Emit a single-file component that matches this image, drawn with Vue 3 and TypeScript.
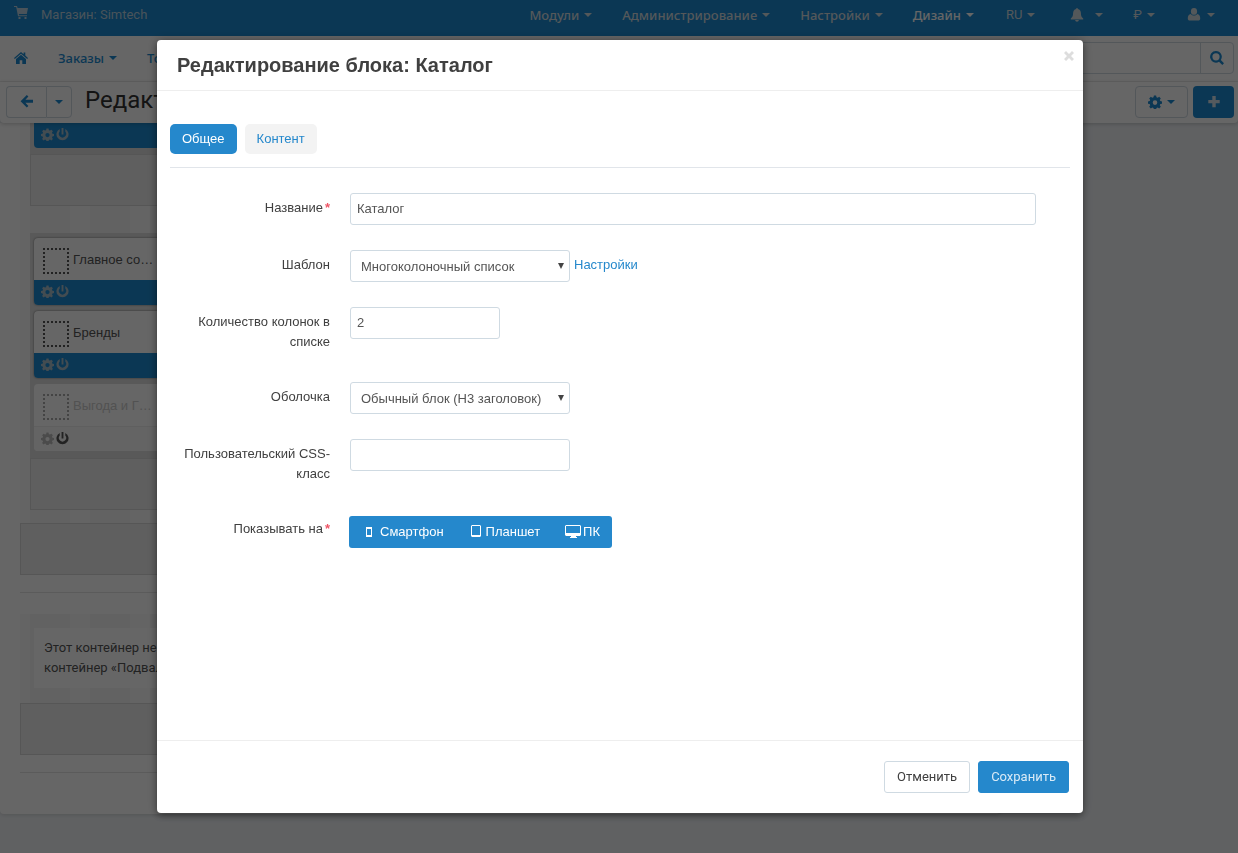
<script setup lang="ts">
import { ref } from 'vue'

type IconName = 'cart' | 'home' | 'back' | 'bell' | 'user' | 'search' | 'gear' | 'plus' | 'power'

const icons: Record<IconName, string> = {
  cart: 'M0 0h3l.6 2H14l-1.2 6H4.8l.3 1.2H13v1H4L2.2 1H0zM4.5 11h2v2h-2zM10.5 11h2v2h-2z',
  home: 'M7 1l2.600 2.200V1.600h1.700v3L14 7l-.8.9L7 2.700.8 7.900 0 7zM7 3.800l5 4.200v5H8.300V9.300H5.700V13H2V8z',
  back: 'M6.800 0l1.600 1.600-3 3.200H13v3H5.400l3 3.200-1.600 1.600L.6 6.300z',
  bell: 'M7 0c.6 0 .9.4.9 1 2 .5 3 2.200 3 4 0 3 .8 4.200 2.300 5.500v1H.8v-1C2.300 9.200 3.100 8 3.100 5c0-1.800 1-3.500 3-4 0-.6.3-1 .9-1zM5.200 12h3.600c0 1-.8 1.700-1.800 1.700S5.200 13 5.200 12z',
  user: 'M7 0a3.100 3.400 0 110 6.800A3.100 3.400 0 017 0zM3.800 6.100c.9 1 2 1.500 3.200 1.500s2.300-.5 3.200-1.500c2.200.2 3 2 3 4.400 0 1.400-.8 2-2 2H2.800c-1.200 0-2-.6-2-2 0-2.400.8-4.200 3-4.400z',
  search: 'M6 0a5.800 5.800 0 014.800 9l3.200 3.200-1.700 1.700L9 10.700A5.800 5.800 0 116 0zm0 2.200a3.600 3.600 0 100 7.200 3.600 3.600 0 000-7.200z',
  gear: 'M5.900.5h2.200l.4 1.800 1.200.5 1.500-1 1.600 1.600-1 1.500.5 1.200 1.700.4v2.200l-1.700.4-.5 1.200 1 1.500-1.600 1.600-1.500-1-1.200.5-.4 1.700H5.900l-.4-1.700-1.200-.5-1.500 1-1.600-1.600 1-1.500-.5-1.200L0 8.700V6.500l1.700-.4.500-1.200-1-1.500 1.600-1.600 1.500 1 1.200-.5zM7 5.300a2.300 2.300 0 100 4.600 2.300 2.300 0 000-4.600z',
  plus: 'M5.300 1h3.400v4h4v3.300h-4v4H5.300v-4h-4V5h4z',
  power: 'M6 0h2v7H6zM4 1v2.800a3.900 3.900 0 106 0V1a6.500 6.500 0 11-6 0z',
}

const menu = ['Модули', 'Администрирование', 'Настройки', 'Дизайн']
const blocks = [
  { title: 'Главное со…', off: false },
  { title: 'Бренды', off: false },
  { title: 'Выгода и Г…', off: true },
]
const tab = ref('Общее')
const tabs = ['Общее', 'Контент']
const name = ref('Каталог')
const columns = ref('2')
const cssClass = ref('')
</script>

<template>
  <div class="page">
    <header class="topbar">
      <a class="store" href="#">
        <svg class="ico" viewBox="0 0 14 14"><path :d="icons.cart" /></svg>
        <span>Магазин: Simtech</span>
      </a>
      <nav class="menu">
        <a v-for="m in menu" :key="m" href="#" :class="{ current: m === 'Дизайн' }">{{ m }}<i class="caret"></i></a>
        <a class="plain lang" href="#">RU<i class="caret"></i></a>
        <a class="bell" href="#" aria-label="Уведомления"><svg class="ico" viewBox="0 0 14 14"><path :d="icons.bell" /></svg><i class="caret"></i></a>
        <a class="plain" href="#">₽<i class="caret"></i></a>
        <a class="user" href="#" aria-label="Профиль"><svg class="ico" viewBox="0 0 14 14"><path :d="icons.user" /></svg><i class="caret"></i></a>
      </nav>
    </header>

    <div class="subnav">
      <a href="#" aria-label="Главная"><svg class="ico" viewBox="0 0 14 14"><path :d="icons.home" /></svg></a>
      <a href="#">Заказы<i class="caret"></i></a>
      <a href="#">Товары<i class="caret"></i></a>
      <form class="search" @submit.prevent>
        <input type="text" aria-label="Поиск" />
        <button type="submit" aria-label="Найти"><svg class="ico" viewBox="0 0 14 14"><path :d="icons.search" /></svg></button>
      </form>
    </div>

    <div class="actions">
      <div class="split">
        <button aria-label="Назад"><svg class="ico" viewBox="0 0 14 14"><path :d="icons.back" /></svg></button>
        <button aria-label="История"><i class="caret"></i></button>
      </div>
      <h1>Редактирование макета</h1>
      <button class="tool" aria-label="Действия"><svg class="ico" viewBox="0 0 14 14"><path fill-rule="evenodd" :d="icons.gear" /></svg><i class="caret"></i></button>
      <button class="add" aria-label="Добавить"><svg class="ico" viewBox="0 0 14 14"><path :d="icons.plus" /></svg></button>
    </div>

    <main class="layout">
      <div class="sheet">
        <section class="stripes main-area">
          <div class="grid first">
            <div class="card-foot">
              <svg class="ico" viewBox="0 0 14 14"><path fill-rule="evenodd" :d="icons.gear" /></svg>
              <svg class="ico" viewBox="0 0 14 14"><path :d="icons.power" /></svg>
            </div>
          </div>
          <div class="bar"></div>
          <div class="grid second">
            <article v-for="b in blocks" :key="b.title" class="card" :class="{ off: b.off }">
              <div class="card-head"><span class="slot"></span><span>{{ b.title }}</span></div>
              <div class="card-foot">
                <svg class="ico" viewBox="0 0 14 14"><path fill-rule="evenodd" :d="icons.gear" /></svg>
                <svg class="ico power" viewBox="0 0 14 14"><path :d="icons.power" /></svg>
              </div>
            </article>
          </div>
          <div class="bar"></div>
        </section>
        <div class="bar"></div>
        <hr />
        <section class="stripes footer-area">
          <p>Этот контейнер не используется.<br />контейнер «Подвал» по умолчанию.</p>
        </section>
        <div class="bar"></div>
        <hr />
      </div>
    </main>

    <div class="overlay">
      <div class="dialog" role="dialog" aria-labelledby="dialog-title">
        <header class="dialog-head">
          <h2 id="dialog-title">Редактирование блока: Каталог</h2>
          <button class="close" aria-label="Закрыть"><svg viewBox="0 0 10 10"><path d="M2 0l3 3 3-3 2 2-3 3 3 3-2 2-3-3-3 3-2-2 3-3-3-3z" /></svg></button>
        </header>
        <div class="dialog-body">
          <div class="tabs">
            <button v-for="t in tabs" :key="t" :class="{ active: tab === t }" @click="tab = t">{{ t }}</button>
          </div>
          <form class="fields" @submit.prevent>
            <div class="row">
              <label for="f-name">Название<b>*</b></label>
              <div class="control"><input id="f-name" v-model="name" class="full" type="text" /></div>
            </div>
            <div class="row">
              <label for="f-template">Шаблон</label>
              <div class="control">
                <span class="select"><select id="f-template"><option>Многоколоночный список</option></select></span>
                <a href="#">Настройки</a>
              </div>
            </div>
            <div class="row">
              <label for="f-columns">Количество колонок в списке</label>
              <div class="control"><input id="f-columns" v-model="columns" class="short" type="text" /></div>
            </div>
            <div class="row">
              <label for="f-wrapper">Оболочка</label>
              <div class="control"><span class="select"><select id="f-wrapper"><option>Обычный блок (H3 заголовок)</option></select></span></div>
            </div>
            <div class="row">
              <label for="f-class">Пользовательский CSS-класс</label>
              <div class="control"><input id="f-class" v-model="cssClass" type="text" /></div>
            </div>
            <div class="row">
              <span id="devices" class="label">Показывать на<b>*</b></span>
              <div class="devices" role="group" aria-labelledby="devices">
                <button type="button"><svg class="phone" viewBox="0 0 6 10"><path fill-rule="evenodd" d="M0 0h6v10H0zM1 2h4v6H1z" /></svg>Смартфон</button>
                <button type="button"><svg class="tablet" viewBox="0 0 10 12"><path fill-rule="evenodd" d="M1 0h8l1 1v10l-1 1H1l-1-1V1zM1 1v9h8V1z" /></svg>Планшет</button>
                <button type="button"><svg class="desktop" viewBox="0 0 16 13"><path fill-rule="evenodd" d="M1 0h14l1 1v9l-1 1h-4v1h1v1H5v-1h1v-1H1l-1-1V1zM1 1v7h14V1z" /></svg>ПК</button>
              </div>
            </div>
          </form>
        </div>
        <footer class="dialog-foot">
          <button class="cancel">Отменить</button>
          <button class="save">Сохранить</button>
        </footer>
      </div>
    </div>
  </div>
</template>

<style>
body { margin: 0; background: #f0f3f6; overflow: hidden; }
</style>

<style scoped>
* { box-sizing: border-box; }
button, input, select { font: inherit; color: inherit; margin: 0; padding: 0; }
a { text-decoration: none; }
h1, h2, p { margin: 0; }
.page {
  height: 100vh; overflow: hidden; display: flex; flex-direction: column;
  font: 13px/20px "Liberation Sans", Arial, sans-serif; color: #404040; background: #f0f3f6;
}
.ico { width: 14px; height: 14px; fill: currentColor; flex: none; }
.caret { border: 4px solid transparent; border-top-color: currentColor; border-bottom: 0; flex: none; }

.topbar {
  height: 36px; flex: none; display: flex; justify-content: space-between; align-items: flex-start;
  padding: 5px 23px 0 14px; background: #1c8bd2; color: #bfd0dc;
}
.store { display: flex; gap: 13px; color: #b8d0e0; font-family: Roboto, sans-serif; }
.store .ico { margin-top: 1px; }
.menu { display: flex; gap: 30px; font-family: "Noto Sans", sans-serif; font-weight: 500; }
.menu a { display: flex; align-items: center; gap: 5px; color: #d2dbe0; }
.menu .current { color: #fff; }
.menu .plain { font-family: Roboto, sans-serif; font-weight: 400; }
.menu .lang { margin-left: 2px; }
.menu .bell { gap: 11px; margin-left: 5px; }
.menu .user { gap: 6px; margin-left: 2px; }

.subnav {
  height: 46px; flex: none; display: flex; align-items: center; gap: 30px; padding: 0 4px 2px 14px;
  background: #fff; border-bottom: 1px solid #f0f0f0;
  font-family: "Noto Sans", sans-serif; font-weight: 500;
}
.subnav a { display: flex; align-items: center; gap: 5px; color: #1c8bd2; }
.search { margin-left: auto; width: 300px; height: 32px; display: flex; border: 1px solid #cfdae2; border-radius: 4px; }
.search input { flex: 1; min-width: 0; border: 0; background: none; }
.search button {
  width: 33px; display: flex; align-items: center; justify-content: center;
  border: 0; border-left: 1px solid #cfdae2; background: none; color: #1c8bd2;
}

.actions {
  height: 41px; flex: none; display: flex; align-items: center; padding: 0 4px 2px 6px;
  background: #fff; color: #1c8bd2; border-radius: 0 0 4px 4px; box-shadow: 0 1px 4px #00000033; z-index: 1;
}
.actions button { height: 32px; display: flex; align-items: center; justify-content: center; border: 1px solid #cfdae2; border-radius: 4px; background: none; }
.split { display: flex; }
.split button:first-child { width: 40px; border-radius: 4px 0 0 4px; border-right: 0; }
.split button:last-child { width: 26px; border-radius: 0 4px 4px 0; }
.actions h1 { flex: 1; margin-left: 13px; padding-bottom: 4px; font: 400 24px/32px Roboto, sans-serif; color: #333; white-space: nowrap; }
.actions .tool { width: 53px; gap: 5px; }
.actions .add { width: 41px; margin-left: 5px; border: 0; background: #1c8bd2; color: #d5e2eb; }

.layout { flex: 1; min-height: 0; overflow: hidden; }
.sheet { width: 1000px; max-width: 100%; padding: 0 20px 41px; background: #fff; border-radius: 0 0 4px 4px; box-shadow: 0 1px 4px #00000022; }
.stripes { background: repeating-linear-gradient(90deg, #fbfbfb 0 10px, #f4f4f4 10px 50px, #fbfbfb 50px 60px) #fbfbfb; }
.main-area { padding: 0 10px 13px; }
.grid { background: #dedede; padding: 0 4px; }
.grid.first { height: 31px; }
.first .card-foot { height: 25px; }
.grid.second { margin-top: 27px; padding: 5px 4px 7px; display: grid; gap: 6px; }
.bar { height: 52px; background: #ededed; border: 1px solid #d8d8d8; }
.card { border-radius: 4px; background: #fff; box-shadow: 0 0 2px #00000088; }
.card-head { height: 42px; display: flex; align-items: center; gap: 4px; padding: 2px 9px 0; color: #555; }
.slot { width: 26px; height: 26px; margin-top: 2px; border: 2px dotted #555; }
.card-foot {
  height: 25px; display: flex; align-items: center; gap: 2px; padding: 0 0 2px 7px;
  border-radius: 0 0 4px 4px; background: #1c8bd2; color: #a9bdca;
}
.card-foot .ico { width: 13px; height: 13px; }
.card.off { box-shadow: none; }
.off .card-head { color: #ccc; }
.off .slot { border-color: #aaa; }
.off .card-foot { background: #fafafa; border-top: 1px solid #eee; color: #bbb; }
.off .power { color: #555; }
hr { margin: 17px 0 21px; border: 0; border-top: 1px solid #e3e3e3; }
.sheet hr:last-child { margin-bottom: 0; }
.footer-area { padding: 14px 14px 15px; }
.footer-area p { height: 60px; padding: 10px; background: #fff; color: #555; font-family: Roboto, sans-serif; }

.overlay { position: fixed; inset: 0; z-index: 2; display: flex; padding: 40px 155px 40px 157px; background: #00000099; }
.dialog {
  flex: 1; display: flex; flex-direction: column; background: #fff; border-radius: 4px;
  box-shadow: 0 3px 7px #0000004d, 0 0 12px #00000044;
}
.dialog-head { height: 51px; display: flex; justify-content: space-between; padding: 9px 9px 0 20px; border-bottom: 1px solid #eee; }
.dialog-head h2 { font: 700 20px/32px "Liberation Sans", Arial, sans-serif; }
.close { width: 10px; height: 10px; margin-top: 2px; border: 0; background: none; display: flex; color: #ddd; }
.close svg { width: 10px; height: 10px; fill: currentColor; }
.dialog-body { flex: 1; padding: 33px 13px 0; }
.tabs { display: flex; gap: 8px; padding-bottom: 13px; border-bottom: 1px solid #e1e5ea; }
.tabs button { height: 30px; padding: 0 12px; border: 0; border-radius: 5px; background: #f3f3f3; color: #2588cc; }
.tabs .active { background: #2588cc; color: #fff; }
.fields { display: grid; gap: 25px; padding-top: 25px; }
.row { display: flex; align-items: flex-start; gap: 20px; }
.row label, .label { width: 160px; flex: none; padding: 5px 0; text-align: right; }
.row b { margin-left: 2px; color: #ee5566; }
.control { flex: 1; display: flex; gap: 4px; margin-right: 34px; }
.control input, .select { width: 220px; height: 32px; border: 1px solid #cfdae2; border-radius: 3px; background: #fff; color: #555; }
.control input { padding: 0 6px 2px; }
.control .full { width: 100%; }
.control .short { width: 150px; }
.select { position: relative; display: flex; }
.select select { appearance: none; flex: 1; border: 0; padding: 2px 10px 0; background: none; }
.select::after { content: ""; position: absolute; right: 5px; top: 12px; border: 3px solid transparent; border-top: 6px solid #444; border-bottom: 0; pointer-events: none; }
.control a { padding-top: 5px; color: #2588cc; }
.devices { display: flex; margin: 2px 0 0 -1px; height: 32px; border-radius: 3px; background: #2588cc; }
.devices button { display: flex; align-items: center; border: 0; padding: 0 12px 0 13px; background: none; color: #fff; }
.devices svg { fill: currentColor; }
.devices .phone { width: 6px; height: 10px; margin: 0 8px 0 4px; }
.devices .tablet { width: 10px; height: 12px; margin: 0 5px 2px 2px; }
.devices .desktop { width: 16px; height: 13px; margin: 0 2px 2px 0; }
.dialog-foot { display: flex; justify-content: flex-end; gap: 8px; padding: 20px 14px; border-top: 1px solid #eee; font-family: Roboto, sans-serif; }
.dialog-foot button { height: 32px; padding: 0 12px; border: 1px solid #cfdae2; border-radius: 3px; background: #fff; }
.dialog-foot .save { border-color: #2588cc; background: #2588cc; color: #d9eaf6; }
</style>
